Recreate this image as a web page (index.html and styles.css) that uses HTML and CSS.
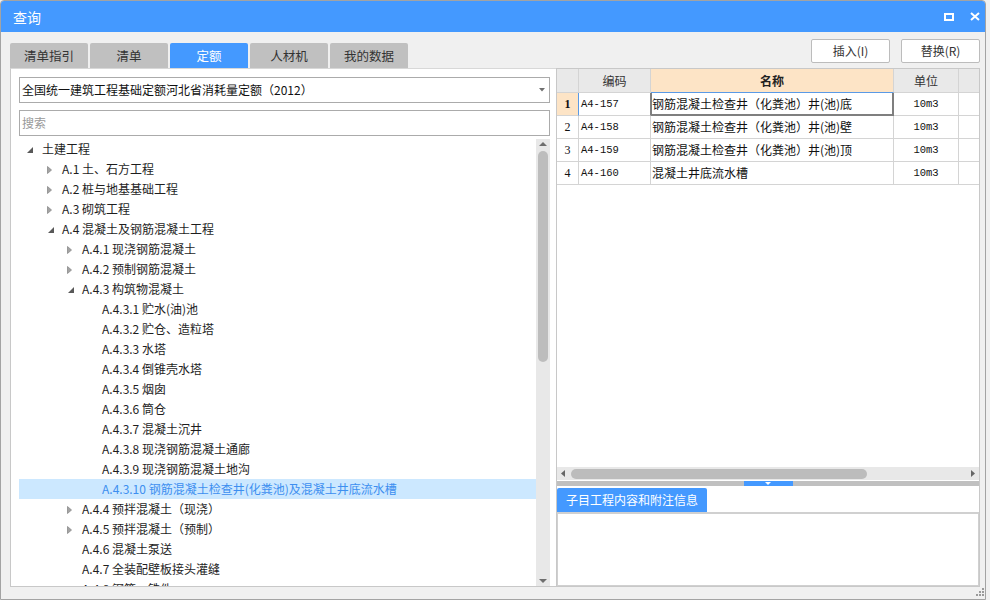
FILE: index.html
```html
<!DOCTYPE html>
<html lang="zh-CN">
<head>
<meta charset="utf-8">
<title>查询</title>
<link rel="stylesheet" href="styles.css">
</head>
<body>
<div class="window">
  <div class="titlebar">
    <span class="title">查询</span>
    <div class="controls">
      <svg width="10" height="8" viewBox="0 0 10 8"><rect x="1" y="1" width="8" height="6" fill="none" stroke="#fff" stroke-width="2"/></svg>
      <svg width="10" height="9" viewBox="0 0 10 9"><path d="M1 1 L9 8 M9 1 L1 8" stroke="#fff" stroke-width="2" fill="none"/></svg>
    </div>
  </div>
  <div class="toolbar">
    <div class="tabs">
      <div class="tab">清单指引</div>
      <div class="tab">清单</div>
      <div class="tab active">定额</div>
      <div class="tab">人材机</div>
      <div class="tab">我的数据</div>
    </div>
    <div class="buttons">
      <div class="btn">插入(I)</div>
      <div class="btn">替换(R)</div>
    </div>
  </div>
  <div class="main">
    <div class="left">
      <div class="select">
        <span>全国统一建筑工程基础定额河北省消耗量定额（2012）</span>
        <svg width="6" height="4" viewBox="0 0 6 4"><path d="M0 0 H6 L3 3.5 Z" fill="#707070"/></svg>
      </div>
      <div class="search">搜索</div>
      <div class="tree">
        <div class="rows">
          <div class="row l0"><span class="tw"><svg class="ex" width="6" height="6" viewBox="0 0 6 6"><path d="M6 0 V6 H0 Z" fill="#595959"/></svg></span>土建工程</div>
          <div class="row l1"><span class="tw"><svg class="co" width="5" height="8" viewBox="0 0 5 8"><path d="M0.5 0.5 L4.5 4 L0.5 7.5 Z" fill="#a3a3a3" stroke="#8a8a8a" stroke-width="0.8"/></svg></span>A.1 土、石方工程</div>
          <div class="row l1"><span class="tw"><svg class="co" width="5" height="8" viewBox="0 0 5 8"><path d="M0.5 0.5 L4.5 4 L0.5 7.5 Z" fill="#a3a3a3" stroke="#8a8a8a" stroke-width="0.8"/></svg></span>A.2 桩与地基基础工程</div>
          <div class="row l1"><span class="tw"><svg class="co" width="5" height="8" viewBox="0 0 5 8"><path d="M0.5 0.5 L4.5 4 L0.5 7.5 Z" fill="#a3a3a3" stroke="#8a8a8a" stroke-width="0.8"/></svg></span>A.3 砌筑工程</div>
          <div class="row l1"><span class="tw"><svg class="ex" width="6" height="6" viewBox="0 0 6 6"><path d="M6 0 V6 H0 Z" fill="#595959"/></svg></span>A.4 混凝土及钢筋混凝土工程</div>
          <div class="row l2"><span class="tw"><svg class="co" width="5" height="8" viewBox="0 0 5 8"><path d="M0.5 0.5 L4.5 4 L0.5 7.5 Z" fill="#a3a3a3" stroke="#8a8a8a" stroke-width="0.8"/></svg></span>A.4.1 现浇钢筋混凝土</div>
          <div class="row l2"><span class="tw"><svg class="co" width="5" height="8" viewBox="0 0 5 8"><path d="M0.5 0.5 L4.5 4 L0.5 7.5 Z" fill="#a3a3a3" stroke="#8a8a8a" stroke-width="0.8"/></svg></span>A.4.2 预制钢筋混凝土</div>
          <div class="row l2"><span class="tw"><svg class="ex" width="6" height="6" viewBox="0 0 6 6"><path d="M6 0 V6 H0 Z" fill="#595959"/></svg></span>A.4.3 构筑物混凝土</div>
          <div class="row l3"><span class="tw"></span>A.4.3.1 贮水(油)池</div>
          <div class="row l3"><span class="tw"></span>A.4.3.2 贮仓、造粒塔</div>
          <div class="row l3"><span class="tw"></span>A.4.3.3 水塔</div>
          <div class="row l3"><span class="tw"></span>A.4.3.4 倒锥壳水塔</div>
          <div class="row l3"><span class="tw"></span>A.4.3.5 烟囱</div>
          <div class="row l3"><span class="tw"></span>A.4.3.6 筒仓</div>
          <div class="row l3"><span class="tw"></span>A.4.3.7 混凝土沉井</div>
          <div class="row l3"><span class="tw"></span>A.4.3.8 现浇钢筋混凝土通廊</div>
          <div class="row l3"><span class="tw"></span>A.4.3.9 现浇钢筋混凝土地沟</div>
          <div class="row l3 sel"><span class="tw"></span>A.4.3.10 钢筋混凝土检查井(化粪池)及混凝土井底流水槽</div>
          <div class="row l2"><span class="tw"><svg class="co" width="5" height="8" viewBox="0 0 5 8"><path d="M0.5 0.5 L4.5 4 L0.5 7.5 Z" fill="#a3a3a3" stroke="#8a8a8a" stroke-width="0.8"/></svg></span>A.4.4 预拌混凝土（现浇）</div>
          <div class="row l2"><span class="tw"><svg class="co" width="5" height="8" viewBox="0 0 5 8"><path d="M0.5 0.5 L4.5 4 L0.5 7.5 Z" fill="#a3a3a3" stroke="#8a8a8a" stroke-width="0.8"/></svg></span>A.4.5 预拌混凝土（预制）</div>
          <div class="row l2"><span class="tw"></span>A.4.6 混凝土泵送</div>
          <div class="row l2"><span class="tw"></span>A.4.7 全装配壁板接头灌缝</div>
          <div class="row l2"><span class="tw"></span>A.4.8 钢筋、铁件</div>
        </div>
        <div class="vscroll">
          <svg class="vup" width="8" height="4" viewBox="0 0 8 4"><path d="M0 4 L4 0 L8 4 Z" fill="#6e6e6e"/></svg>
          <div class="vthumb"></div>
          <svg class="vdown" width="8" height="4" viewBox="0 0 8 4"><path d="M0 0 L4 4 L8 0 Z" fill="#6e6e6e"/></svg>
        </div>
      </div>
    </div>
    <div class="right">
      <div class="grid-wrap">
        <div class="grid">
          <div class="c h"></div>
          <div class="c h">编码</div>
          <div class="c h hsel">名称</div>
          <div class="c h">单位</div>
          <div class="c h last"></div>

          <div class="c num numsel">1</div>
          <div class="c code codesel">A4-157</div>
          <div class="c name cellsel">钢筋混凝土检查井（化粪池）井(池)底</div>
          <div class="c unit">10m3</div>
          <div class="c last"></div>

          <div class="c num">2</div>
          <div class="c code">A4-158</div>
          <div class="c name">钢筋混凝土检查井（化粪池）井(池)壁</div>
          <div class="c unit">10m3</div>
          <div class="c last"></div>

          <div class="c num">3</div>
          <div class="c code">A4-159</div>
          <div class="c name">钢筋混凝土检查井（化粪池）井(池)顶</div>
          <div class="c unit">10m3</div>
          <div class="c last"></div>

          <div class="c num">4</div>
          <div class="c code">A4-160</div>
          <div class="c name">混凝土井底流水槽</div>
          <div class="c unit">10m3</div>
          <div class="c last"></div>
        </div>
      </div>
      <div class="hscroll">
        <svg width="4" height="7" viewBox="0 0 4 7"><path d="M4 0 V7 L0 3.5 Z" fill="#666"/></svg>
        <div class="hthumb"></div>
        <svg class="hright" width="4" height="7" viewBox="0 0 4 7"><path d="M0 0 V7 L4 3.5 Z" fill="#666"/></svg>
      </div>
      <div class="splitter">
        <div class="handle"><svg width="6" height="3" viewBox="0 0 6 3"><path d="M0 0 H6 L3 3 Z" fill="#fff"/></svg></div>
      </div>
      <div class="subtabs">
        <div class="subtab">子目工程内容和附注信息</div>
      </div>
      <div class="infobox"></div>
    </div>
  </div>
  <div class="footer">
    <svg width="8" height="8" viewBox="0 0 8 8" fill="#9a9a9a">
      <rect x="6" y="0" width="2" height="2"/>
      <rect x="3" y="3" width="2" height="2"/><rect x="6" y="3" width="2" height="2"/>
      <rect x="0" y="6" width="2" height="2"/><rect x="3" y="6" width="2" height="2"/><rect x="6" y="6" width="2" height="2"/>
    </svg>
  </div>
</div>
</body>
</html>
```

FILE: styles.css
```css
html, body {
  margin: 0;
  padding: 0;
}
body {
  background: #f0f0f0;
  font-family: "Noto Sans CJK SC", "Microsoft YaHei", sans-serif;
  font-size: 12px;
  color: #222;
}
.window {
  width: 986px;
  height: 600px;
  box-sizing: border-box;
  border: 1px solid #a3a3a3;
  border-radius: 4px 4px 0 0;
  background: #f0f0f0;
  display: flex;
  flex-direction: column;
  overflow: hidden;
}
.titlebar {
  height: 31px;
  flex: none;
  background: #4499ff;
  display: flex;
  align-items: center;
  justify-content: space-between;
  padding: 0 5px 0 12px;
  color: #fff;
}
.title {
  font-size: 14px;
  line-height: 31px;
  padding-top: 2px;
}
.controls {
  display: flex;
  align-items: center;
  gap: 16px;
}
.controls svg {
  display: block;
}
.toolbar {
  height: 36px;
  flex: none;
  display: flex;
  justify-content: space-between;
  padding: 0 5px 0 9px;
}
.tabs {
  display: flex;
  gap: 2px;
  align-self: flex-end;
}
.tab {
  width: 78px;
  height: 25px;
  background: #c0c0c0;
  color: #333;
  font-size: 12.5px;
  line-height: 25px;
  text-align: center;
  border-radius: 2px 2px 0 0;
}
.tab.active {
  background: #4499ff;
  color: #fff;
}
.buttons {
  display: flex;
  gap: 11px;
  padding-top: 7px;
}
.btn {
  width: 79px;
  height: 24px;
  box-sizing: border-box;
  border: 1px solid #bcbcbc;
  border-radius: 2px;
  background: #fff;
  color: #333;
  line-height: 22px;
  text-align: center;
}
.main {
  height: 519px;
  flex: none;
  display: flex;
  padding-left: 9px;
}
.left {
  width: 546px;
  flex: none;
  box-sizing: border-box;
  border-left: 1px solid #c8c8c8;
  border-top: 1px solid #d8d8d8;
  border-bottom: 1px solid #c8c8c8;
  background: #fff;
  padding: 8px 6px 0 8px;
  display: flex;
  flex-direction: column;
}
.select {
  height: 26px;
  flex: none;
  box-sizing: border-box;
  border: 1px solid #ababab;
  display: flex;
  align-items: center;
  justify-content: space-between;
  padding: 0 4px 0 2px;
  color: #111;
  line-height: 24px;
}
.select svg {
  display: block;
}
.search {
  margin-top: 7px;
  height: 26px;
  flex: none;
  box-sizing: border-box;
  border: 1px solid #ababab;
  color: #999;
  padding-left: 2px;
  line-height: 24px;
}
.tree {
  margin-top: 3px;
  flex: 1;
  min-height: 0;
  display: flex;
}
.rows {
  flex: 1;
  overflow: hidden;
}
.row {
  height: 20px;
  line-height: 20px;
  display: flex;
  align-items: center;
  white-space: nowrap;
  color: #1e1e1e;
}
.row .tw {
  width: 16px;
  flex: none;
  height: 20px;
  display: flex;
  align-items: center;
}
.row .tw svg {
  display: block;
}
.tw .co {
  margin-left: 1px;
  margin-top: 1px;
}
.tw .ex {
  margin-left: 2px;
  margin-top: 2px;
}
.l0 .tw .ex {
  margin-left: 1px;
}
.l0 { padding-left: 7px; }
.l1 { padding-left: 27px; }
.l2 { padding-left: 47px; }
.l3 { padding-left: 67px; }
.row.sel {
  background: #cce8ff;
  color: #3d8ff0;
}
.vscroll {
  width: 14px;
  flex: none;
  background: #e8e8e8;
  display: flex;
  flex-direction: column;
  align-items: center;
  padding: 3px 0 3px;
  box-sizing: border-box;
}
.vscroll svg {
  display: block;
  flex: none;
}
.vthumb {
  margin-top: 5px;
  width: 10px;
  height: 211px;
  border-radius: 5px;
  background: #bdbdbd;
}
.vdown {
  margin-top: auto;
}
.right {
  width: 424px;
  flex: none;
  box-sizing: border-box;
  border: 1px solid #c8c8c8;
  background: #fff;
  display: flex;
  flex-direction: column;
}
.grid-wrap {
  height: 398px;
  flex: none;
}
.grid {
  display: grid;
  grid-template-columns: 22px 72px 243px 65px 20px;
  grid-template-rows: 24px repeat(4, 23px);
}
.c {
  box-sizing: border-box;
  border-right: 1px solid #d4d4d4;
  border-bottom: 1px solid #d4d4d4;
  line-height: 22px;
  overflow: hidden;
  white-space: nowrap;
  color: #111;
}
.c.last {
  border-right: none;
}
.c.h {
  background: #e9e9e9;
  line-height: 23px;
  text-align: center;
  color: #333;
}
.c.hsel {
  background: #fde4c6;
  font-weight: bold;
  color: #222;
  border-bottom-color: #5a9ae6;
}
.c.num {
  font-family: "Liberation Serif", serif;
  font-size: 12px;
  text-align: center;
}
.c.numsel {
  background: #fde4c6;
  font-weight: bold;
  border-right-color: #5a9ae6;
}
.c.code {
  font-family: "Liberation Mono", monospace;
  font-size: 10.5px;
  padding-left: 2px;
}
.c.codesel {
  border-right-color: #7f7f7f;
}
.c.name {
  padding-left: 1px;
}
.c.cellsel {
  border-right-color: #7f7f7f;
  border-bottom-color: #7f7f7f;
  box-shadow: inset 1px 0 0 #7f7f7f, inset -1px 0 0 #7f7f7f, inset 0 -1px 0 #7f7f7f;
}
.c.unit {
  font-family: "Liberation Mono", monospace;
  font-size: 10.5px;
  text-align: center;
}
.hscroll {
  height: 13px;
  flex: none;
  background: #e8e8e8;
  display: flex;
  align-items: center;
  padding: 0 4px;
}
.hscroll svg {
  display: block;
}
.hthumb {
  margin-left: 6px;
  width: 296px;
  height: 10px;
  border-radius: 5px;
  background: #bcbcbc;
}
.hright {
  margin-left: auto;
}
.splitter {
  margin-top: 1px;
  height: 5px;
  flex: none;
  background: #c0c0c0;
  display: flex;
  justify-content: center;
}
.handle {
  width: 49px;
  height: 5px;
  background: #4499ff;
  display: flex;
  justify-content: center;
  align-items: flex-start;
}
.handle svg {
  display: block;
  margin-top: 1px;
}
.subtabs {
  margin-top: 2px;
  height: 24px;
  flex: none;
  display: flex;
}
.subtab {
  width: 150px;
  height: 24px;
  background: #4499ff;
  color: #fff;
  line-height: 24px;
  padding-left: 9px;
  box-sizing: border-box;
  border-radius: 2px 2px 0 0;
}
.infobox {
  flex: 1;
  box-sizing: border-box;
  border: 1px solid #d0d0d0;
  border-top-width: 2px;
}
.footer {
  flex: 1;
  display: flex;
  justify-content: flex-end;
  align-items: flex-start;
  padding: 1px 1px 0 0;
}
.footer svg {
  display: block;
}
```
